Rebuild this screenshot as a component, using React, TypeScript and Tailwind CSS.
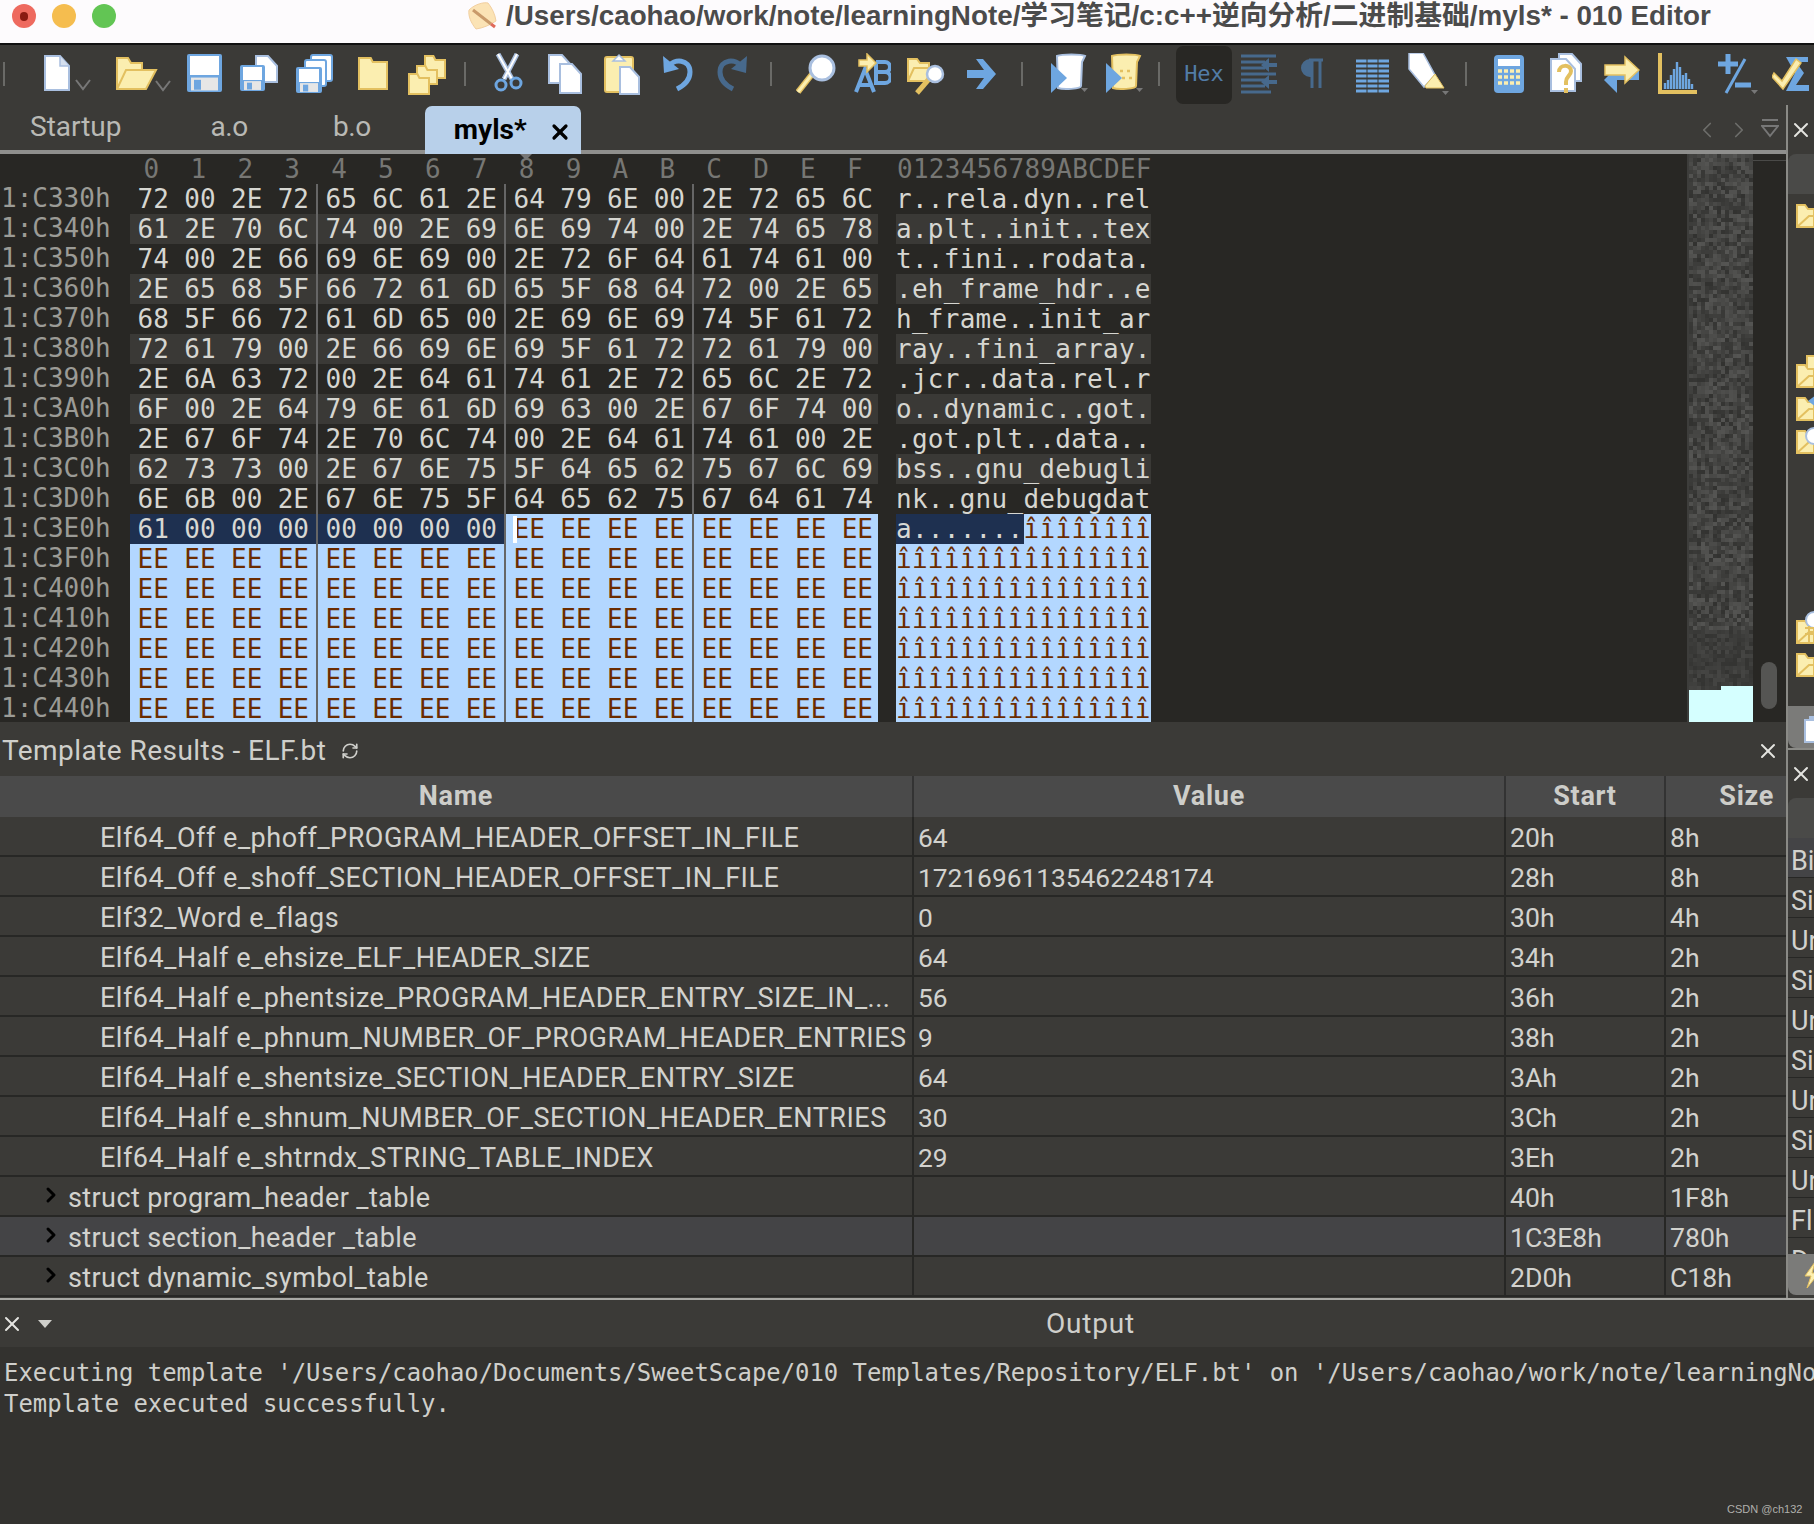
import { X, ChevronRight, ChevronLeft, RefreshCw } from 'lucide-react';

const HEX_ROWS = [
  { addr: '1:C330h', bytes: '72 00 2E 72 65 6C 61 2E 64 79 6E 00 2E 72 65 6C' },
  { addr: '1:C340h', bytes: '61 2E 70 6C 74 00 2E 69 6E 69 74 00 2E 74 65 78' },
  { addr: '1:C350h', bytes: '74 00 2E 66 69 6E 69 00 2E 72 6F 64 61 74 61 00' },
  { addr: '1:C360h', bytes: '2E 65 68 5F 66 72 61 6D 65 5F 68 64 72 00 2E 65' },
  { addr: '1:C370h', bytes: '68 5F 66 72 61 6D 65 00 2E 69 6E 69 74 5F 61 72' },
  { addr: '1:C380h', bytes: '72 61 79 00 2E 66 69 6E 69 5F 61 72 72 61 79 00' },
  { addr: '1:C390h', bytes: '2E 6A 63 72 00 2E 64 61 74 61 2E 72 65 6C 2E 72' },
  { addr: '1:C3A0h', bytes: '6F 00 2E 64 79 6E 61 6D 69 63 00 2E 67 6F 74 00' },
  { addr: '1:C3B0h', bytes: '2E 67 6F 74 2E 70 6C 74 00 2E 64 61 74 61 00 2E' },
  { addr: '1:C3C0h', bytes: '62 73 73 00 2E 67 6E 75 5F 64 65 62 75 67 6C 69' },
  { addr: '1:C3D0h', bytes: '6E 6B 00 2E 67 6E 75 5F 64 65 62 75 67 64 61 74' },
  { addr: '1:C3E0h', bytes: '61 00 00 00 00 00 00 00 EE EE EE EE EE EE EE EE' },
  { addr: '1:C3F0h', bytes: 'EE EE EE EE EE EE EE EE EE EE EE EE EE EE EE EE' },
  { addr: '1:C400h', bytes: 'EE EE EE EE EE EE EE EE EE EE EE EE EE EE EE EE' },
  { addr: '1:C410h', bytes: 'EE EE EE EE EE EE EE EE EE EE EE EE EE EE EE EE' },
  { addr: '1:C420h', bytes: 'EE EE EE EE EE EE EE EE EE EE EE EE EE EE EE EE' },
  { addr: '1:C430h', bytes: 'EE EE EE EE EE EE EE EE EE EE EE EE EE EE EE EE' },
  { addr: '1:C440h', bytes: 'EE EE EE EE EE EE EE EE EE EE EE EE EE EE EE EE' },
];

const TEMPLATE_ROWS = [
  { name: 'Elf64_Off e_phoff_PROGRAM_HEADER_OFFSET_IN_FILE', value: '64', start: '20h', size: '8h' },
  { name: 'Elf64_Off e_shoff_SECTION_HEADER_OFFSET_IN_FILE', value: '17216961135462248174', start: '28h', size: '8h' },
  { name: 'Elf32_Word e_flags', value: '0', start: '30h', size: '4h' },
  { name: 'Elf64_Half e_ehsize_ELF_HEADER_SIZE', value: '64', start: '34h', size: '2h' },
  { name: 'Elf64_Half e_phentsize_PROGRAM_HEADER_ENTRY_SIZE_IN_...', value: '56', start: '36h', size: '2h' },
  { name: 'Elf64_Half e_phnum_NUMBER_OF_PROGRAM_HEADER_ENTRIES', value: '9', start: '38h', size: '2h' },
  { name: 'Elf64_Half e_shentsize_SECTION_HEADER_ENTRY_SIZE', value: '64', start: '3Ah', size: '2h' },
  { name: 'Elf64_Half e_shnum_NUMBER_OF_SECTION_HEADER_ENTRIES', value: '30', start: '3Ch', size: '2h' },
  { name: 'Elf64_Half e_shtrndx_STRING_TABLE_INDEX', value: '29', start: '3Eh', size: '2h' },
  { name: 'struct program_header _table', value: '', start: '40h', size: '1F8h', tree: true },
  { name: 'struct section_header _table', value: '', start: '1C3E8h', size: '780h', tree: true, active: true },
  { name: 'struct dynamic_symbol_table', value: '', start: '2D0h', size: 'C18h', tree: true },
];

const SIDE_ROWS = ['Bi', 'Si', 'Ur', 'Si', 'Ur', 'Si', 'Ur', 'Si', 'Ur', 'Fl', 'D'];

const BLUE = '#6ea6e0';
const PALE = '#a9bfdf';
const YEL = '#fbeeb0';
const YELL = '#e3c060';
const DIM = '#47698c';

function Ico({ w, className = '', children }: { w: number; className?: string; children: React.ReactNode }) {
  return (
    <svg width={w} height={42} viewBox={`0 0 ${w} 42`} className={`shrink-0 ${className}`}>
      {children}
    </svg>
  );
}

function Sep({ className = '' }: { className?: string }) {
  return <div className={`w-[2px] h-[24px] bg-[#6a6a67] shrink-0 ${className}`} />;
}

function Doc({ x, y, w, h, fill = '#fff' }: { x: number; y: number; w: number; h: number; fill?: string }) {
  return (
    <path
      d={`M${x} ${y}h${w - 9}l9 10v${h - 10}h-${w}z`}
      fill={fill}
      stroke={PALE}
      strokeWidth="2"
    />
  );
}

function Floppy({ x, y, w, h }: { x: number; y: number; w: number; h: number }) {
  return (
    <g>
      <rect x={x} y={y} width={w} height={h} rx="2" fill={BLUE} />
      <rect x={x + 3} y={y + 2} width={w - 6} height={h * 0.5} fill="#fff" />
      <rect x={x + 4} y={y + h * 0.62} width={w - 8} height={h * 0.34} fill="#e6e6e6" />
      <rect x={x + 7} y={y + h * 0.68} width={w * 0.2} height={h * 0.26} fill={BLUE} />
    </g>
  );
}

function FolderShape({ x, y, w, h }: { x: number; y: number; w: number; h: number }) {
  return (
    <path
      d={`M${x} ${y + h}V${y}h${w * 0.42}l2 4h${w * 0.58 - 2}V${y + h}z`}
      fill={YEL}
      stroke={YELL}
      strokeWidth="2"
    />
  );
}

function Toolbar() {
  return (
    <div className="flex items-center h-[60px] pb-[2px] bg-[#3b3a37] overflow-hidden">
      <Sep className="ml-[3px]" />
      <Ico w={49} className="ml-[39px]">
        <Doc x={1} y={3} w={24} h={34} />
        <path d="M16 3v10h9" fill="#d5dfee" stroke={PALE} strokeWidth="1.5" />
        <path d="M32 27l7 9 7-9" fill="none" stroke="#777" strokeWidth="2" />
      </Ico>
      <Ico w={56} className="ml-[23px]">
        <path d="M1 36V5h11l3 5h11v7" fill={YEL} stroke={YELL} strokeWidth="2" />
        <path d="M1 36l9-19h30l-10 19z" fill={YEL} stroke={YELL} strokeWidth="2" />
        <path d="M40 28l7 9 7-9" fill="none" stroke="#777" strokeWidth="2" />
      </Ico>
      <Ico w={35} className="ml-[15px]">
        <Floppy x={0} y={1} w={35} h={38} />
      </Ico>
      <Ico w={38} className="ml-[18px]">
        <Doc x={16} y={3} w={21} h={26} />
        <Floppy x={0} y={12} w={25} h={26} />
      </Ico>
      <Ico w={37} className="ml-[18px]">
        <rect x={15} y={2} width={21} height={26} rx="2" fill="#fff" stroke={BLUE} strokeWidth="2" />
        <rect x={9} y={7} width={21} height={26} rx="2" fill="#fff" stroke={BLUE} strokeWidth="2" />
        <Floppy x={0} y={14} w={26} h={26} />
      </Ico>
      <Ico w={30} className="ml-[25px]">
        <FolderShape x={1} y={5} w={28} h={31} />
      </Ico>
      <Ico w={39} className="ml-[20px]">
        <FolderShape x={17} y={3} w={20} h={22} />
        <FolderShape x={9} y={13} w={20} h={18} />
        <FolderShape x={1} y={21} w={20} h={20} />
      </Ico>
      <Sep className="ml-[17px]" />
      <Ico w={30} className="ml-[27px]">
        <path d="M5 1l14 25" stroke={PALE} strokeWidth="5" fill="none" />
        <path d="M24 1L11 26" stroke={PALE} strokeWidth="5" fill="none" />
        <path d="M5 1l14 25M24 1L11 26" stroke="#fff" strokeWidth="2" fill="none" />
        <circle cx="8" cy="32" r="5" fill="none" stroke={BLUE} strokeWidth="3" />
        <circle cx="23" cy="30" r="5" fill="none" stroke={BLUE} strokeWidth="3" />
      </Ico>
      <Ico w={34} className="ml-[25px]">
        <Doc x={1} y={2} w={22} h={28} />
        <Doc x={12} y={11} w={21} h={29} />
      </Ico>
      <Ico w={36} className="ml-[22px]">
        <rect x={1} y={4} width={28} height={35} rx="2" fill={YEL} stroke={YELL} strokeWidth="2" />
        <path d="M9 8l6-6 6 6z" fill="#fff" stroke={PALE} strokeWidth="1.5" />
        <Doc x={16} y={14} w={19} h={27} />
      </Ico>
      <Ico w={33} className="ml-[20px]">
        <path d="M8 14c6-9 22-8 22 5 0 9-7 14-13 17" fill="none" stroke={BLUE} strokeWidth="5" />
        <path d="M3 3l1 17 15-4z" fill={BLUE} />
      </Ico>
      <Ico w={34} className="ml-[23px]">
        <path d="M26 14c-6-9-22-8-22 5 0 9 7 14 13 17" fill="none" stroke={DIM} strokeWidth="5" />
        <path d="M31 3l-1 17-15-4z" fill={DIM} />
      </Ico>
      <Sep className="ml-[20px]" />
      <Ico w={40} className="ml-[24px]">
        <path d="M2 39l15-19" stroke={YELL} strokeWidth="6" />
        <path d="M2 39l15-19" stroke={YEL} strokeWidth="3" />
        <circle cx="26" cy="15" r="12" fill="#fff" stroke={PALE} strokeWidth="3" />
      </Ico>
      <Ico w={38} className="ml-[17px]">
        <path d="M3 39L12 16l9 23M6 32h12" fill="none" stroke={BLUE} strokeWidth="4" />
        <path d="M23 9h9a5 5 0 0 1 0 10h-9m9 0a5 5 0 0 1 0 11h-9V9" fill="none" stroke={BLUE} strokeWidth="4" />
        <path d="M6 7h8V1l9 9-9 9v-6H6z" fill={YEL} stroke={YELL} strokeWidth="1.5" />
      </Ico>
      <Ico w={38} className="ml-[16px]">
        <path d="M1 28V6h9l3 4h9v6" fill={YEL} stroke={YELL} strokeWidth="2" />
        <path d="M1 28l6-13h22l-6 13z" fill={YEL} stroke={YELL} strokeWidth="2" />
        <path d="M10 40l12-14" stroke={YELL} strokeWidth="5" />
        <circle cx="28" cy="21" r="8" fill="#fff" stroke={PALE} strokeWidth="2.5" />
      </Ico>
      <Ico w={31} className="ml-[21px]">
        <path d="M1 17h17L10 6h7l13 15-13 15h-7l8-11H1z" fill={BLUE} />
      </Ico>
      <Sep className="ml-[24px]" />
      <Ico w={40} className="ml-[27px]">
        <path d="M7 3c5-2 24-2 28 0l-3 6-1 24c0 3-18 4-23 2z" fill="#fff" stroke={PALE} strokeWidth="2" />
        <path d="M1 10l16 15-16 15z" fill={BLUE} />
        <path d="M31 35l7 0-3.5 4z" fill="#777" />
      </Ico>
      <Ico w={40} className="ml-[15px]">
        <path d="M7 3c5-2 24-2 28 0l-3 6-1 24c0 3-18 4-23 2z" fill={YEL} stroke={YELL} strokeWidth="2" />
        <path d="M15 18h3m4 0h3m-8 7h3m4 0h3" stroke={YELL} strokeWidth="2.5" />
        <path d="M1 10l16 15-16 15z" fill={BLUE} />
        <path d="M31 35l7 0-3.5 4z" fill="#777" />
      </Ico>
      <Sep className="ml-[13px]" />
      <div className="ml-[16px] w-[56px] h-[58px] mt-[2px] pb-[4px] bg-[#282724] rounded-[7px] flex items-center justify-center text-[22px] text-[#527ca6] font-['DejaVu_Sans_Mono',monospace] shrink-0">
        Hex
      </div>
      <Ico w={37} className="ml-[9px]">
        <path d="M0 3h35M0 9h24M0 15h24M0 21h35M0 27h24M0 33h24M0 39h30" stroke={DIM} strokeWidth="3" />
        <path d="M36 10H28V5l-8 7 8 7v-5h8zM36 27H28v-5l-8 7 8 7v-5h8z" fill={DIM} />
      </Ico>
      <Ico w={25} className="ml-[22px]">
        <path d="M10 7a8 8 0 0 0 0 16z" fill={DIM} stroke={DIM} strokeWidth="2" />
        <path d="M9 7h14M12 7v28M20 7v28" stroke={DIM} strokeWidth="3" fill="none" />
      </Ico>
      <Ico w={35} className="ml-[30px]">
        <path d="M1 8h33M1 13h33M1 18h33M1 23h33M1 28h33M1 33h33M1 38h33" stroke={BLUE} strokeWidth="3" />
        <path d="M12 6v34M23 6v34" stroke="#3b3a37" strokeWidth="1" />
      </Ico>
      <Ico w={42} className="ml-[18px]">
        <path d="M1 0h14l12 22-11 12-15-18z" fill="#fff" stroke={PALE} strokeWidth="1.5" />
        <path d="M17 33l10-12 9 14h-18z" fill={YEL} stroke={YELL} strokeWidth="1" />
        <path d="M34 38h7l-3.5 4z" fill="#777" />
      </Ico>
      <Sep className="ml-[15px]" />
      <Ico w={30} className="ml-[27px]">
        <rect x={0} y={2} width={30} height={38} rx="4" fill={BLUE} />
        <rect x={4} y={6} width={22} height={7} fill="#fff" />
        <path d="M4 18h22M4 24h22M4 30h22" stroke={YEL} strokeWidth="3.5" strokeDasharray="4 2" />
      </Ico>
      <Ico w={32} className="ml-[26px]">
        <Doc x={9} y={1} w={22} h={27} />
        <Doc x={1} y={6} w={24} h={32} />
        <path d="M9 19c0-8 12-8 12-1 0 5-5 5-5 11v3" fill="none" stroke={YELL} strokeWidth="4" />
        <path d="M16 35v5" stroke={YELL} strokeWidth="4" />
      </Ico>
      <Ico w={37} className="ml-[21px]">
        <path d="M6 22h8v-5h22v10h-22v5" fill={BLUE} />
        <path d="M1 27l13-13v26z" fill={BLUE} />
        <path d="M2 12h20V4l14 13-14 13v-8H2z" fill={YEL} stroke={YELL} strokeWidth="1.5" />
      </Ico>
      <Ico w={40} className="ml-[18px]">
        <path d="M2 0v39h37" fill="none" stroke={YELL} strokeWidth="4" />
        <path d="M7 36v-6M10 36v-9M13 36v-14M16 36v-20M19 36v-27M22 36v-22M25 36v-14M28 36v-16M31 36v-10M34 36v-5" stroke={BLUE} strokeWidth="2.4" />
      </Ico>
      <Ico w={42} className="ml-[18px]">
        <path d="M12 1v20M2 11h20" stroke={BLUE} strokeWidth="5" />
        <path d="M29 6L10 40" stroke={BLUE} strokeWidth="3" />
        <path d="M19 32h16" stroke={BLUE} strokeWidth="5" />
        <path d="M35 37h7l-3.5 4z" fill="#777" />
      </Ico>
      <Ico w={48} className="ml-[14px]">
        <path d="M14 4h22v5H24l8 11-8 12h13v6H14l9-18z" fill={BLUE} />
        <path d="M2 20l8 8L24 6l5 4-18 26L0 24z" fill={YEL} stroke={YELL} strokeWidth="1.5" />
      </Ico>
    </div>
  );
}

function TabStrip() {
  return (
    <div className="flex items-end h-[45px] text-[28px] text-[#b9b9b5] bg-[#3b3a37] relative">
      <span className="ml-[30px] h-[41px] leading-[36px]">Startup</span>
      <span className="ml-[89px] h-[41px] leading-[36px] tracking-[-0.4px]">a.o</span>
      <span className="ml-[85px] h-[41px] leading-[36px] tracking-[-0.4px]">b.o</span>
      <div className="ml-[54px] w-[156px] h-[48px] -mb-[4px] z-10 bg-[#b8d0ea] rounded-t-[7px] flex items-center text-black font-bold">
        <span className="ml-[29px]">myls*</span>
        <X size={24} strokeWidth={3.2} className="ml-[21px] mt-[3px]" />
      </div>
      <div className="ml-auto mr-[7px] flex items-center gap-[6px] h-[41px] text-[#6d6d6a]">
        <ChevronLeft size={26} strokeWidth={1.6} />
        <ChevronRight size={26} strokeWidth={1.6} />
        <svg width="18" height="22" viewBox="0 0 18 22" className="ml-[3px]">
          <path d="M1 1h16M1 7h16l-8 10z" fill="none" stroke="#777" strokeWidth="2" />
        </svg>
      </div>
    </div>
  );
}

function toAscii(bytes: string[]) {
  return bytes
    .map((b) => {
      if (b === '00') return '.';
      return String.fromCharCode(parseInt(b, 16));
    })
    .join('');
}

function HexGroup({ bytes, tone, last }: { bytes: string[]; tone: string; last: boolean }) {
  const toneClass =
    tone === 'navy'
      ? 'bg-[#1e3050] text-[#d8d8d4]'
      : tone === 'sel'
        ? 'bg-[#b3d7ff] text-[#6b2c00]'
        : tone === 'stripe'
          ? 'bg-[#3a3936] text-[#d6d6d1]'
          : 'text-[#d6d6d1]';
  return (
    <div className={`flex h-full ${last ? 'w-[184px]' : 'w-[188px] border-r-2 border-[#666]'} ${toneClass}`}>
      {bytes.map((b, i) => (
        <span key={i} className="w-[46.9px] shrink-0 text-center -ml-[0.2px]">
          {b}
        </span>
      ))}
    </div>
  );
}

function HexRow({ addr, bytes, index }: { addr: string; bytes: string; index: number }) {
  const list = bytes.split(' ');
  const selected = index >= 12;
  const split = index === 11;
  const tone = selected ? 'sel' : index % 2 === 1 ? 'stripe' : 'plain';
  const text = toAscii(list);
  return (
    <div className="flex h-[30px] leading-[30px] shrink-0">
      <span className="w-[130px] shrink-0 pl-[1px] text-[#9b9b96] leading-[28px]">{addr}</span>
      <div className="flex relative">
        {[0, 1, 2, 3].map((g) => (
          <HexGroup
            key={g}
            bytes={list.slice(g * 4, g * 4 + 4)}
            tone={split ? (g < 2 ? 'navy' : 'sel') : tone}
            last={g === 3}
          />
        ))}
        {split && <span className="absolute left-[383px] top-[2px] w-[4px] h-[27px] bg-white" />}
      </div>
      <div className="ml-[18px] w-[255px] flex tracking-[0.27px]">
        {split ? (
          <>
            <span className="bg-[#1e3050] text-[#d8d8d4] w-[128px]">{text.slice(0, 8)}</span>
            <span className="bg-[#b3d7ff] text-[#6b2c00] flex-1">{text.slice(8)}</span>
          </>
        ) : (
          <span
            className={`flex-1 ${
              selected ? 'bg-[#b3d7ff] text-[#6b2c00]' : index % 2 === 1 ? 'bg-[#3a3936] text-[#d6d6d1]' : 'text-[#d6d6d1]'
            }`}
          >
            {text}
          </span>
        )}
      </div>
    </div>
  );
}

function Minimap() {
  const cells = [];
  let seed = 7;
  for (let y = 0; y < 134; y++) {
    for (let x = 0; x < 16; x++) {
      seed = (seed * 1103515245 + 12345) & 0x7fffffff;
      const v = (seed >> 16) % 36;
      const shade = y > 118 ? 52 + (v >> 1) : 50 + v;
      cells.push(<rect key={`${x}-${y}`} x={x * 4} y={y * 4} width="4" height="4" fill={`rgb(${shade},${shade},${shade - 2})`} />);
    }
  }
  return (
    <svg width="64" height="568" viewBox="0 0 64 568" className="shrink-0">
      {cells}
      <path d="M0 536H32V532H64V568H0z" fill="#d5ffff" />
    </svg>
  );
}

function HexView() {
  const header = '0123456789ABCDEF'.split('');
  return (
    <div className="flex h-[568px] bg-[#282724] font-['DejaVu_Sans_Mono',monospace] text-[26px] overflow-hidden relative">
      <span className="absolute left-[520px] top-0 w-0 h-0 border-x-[6px] border-x-transparent border-t-[6px] border-t-[#777]" />
      <div className="w-[1689px] shrink-0 flex flex-col overflow-hidden border-r-2 border-[#3d3d3b]">
        <div className="flex h-[30px] leading-[30px] shrink-0 text-[#777774]">
          <span className="w-[128px] shrink-0" />
          <div className="flex w-[750px] shrink-0">
            {header.map((h) => (
              <span key={h} className="w-[46.9px] shrink-0 text-center">
                {h}
              </span>
            ))}
          </div>
          <span className="ml-[19px] tracking-[0.27px]">0123456789ABCDEF</span>
        </div>
        {HEX_ROWS.map((r, i) => (
          <HexRow key={r.addr} addr={r.addr} bytes={r.bytes} index={i} />
        ))}
      </div>
      <Minimap />
      <div className="flex-1 relative">
        <div className="mt-[6px] h-[1px] bg-[#4a4a48]" />
        <div className="absolute left-[8px] top-[508px] w-[16px] h-[47px] rounded-[8px] bg-[#555553]" />
      </div>
    </div>
  );
}

function TemplateTable() {
  const cols = 'grid grid-cols-[914px_592px_160px_120px]';
  return (
    <div className="text-[26.6px] text-[#d2d2ce]">
      <div className={`${cols} h-[41px] pt-0 font-bold text-[27px] text-[#cdcdc9] tracking-[0.7px] border-b border-[#2a2a28]`}>
        <div className="bg-[#4a4a4a] border-r-2 border-[#333] flex items-center justify-center">Name</div>
        <div className="bg-[#4a4a4a] border-r-2 border-[#333] flex items-center justify-center">Value</div>
        <div className="bg-[#4a4a4a] border-r-2 border-[#333] flex items-center justify-center">Start</div>
        <div className="bg-[#4a4a4a] flex items-center justify-end pr-[12px]">Size</div>
      </div>
      {TEMPLATE_ROWS.map((r) => (
        <div
          key={r.name}
          className={`${cols} h-[40px] leading-[38px] border-b-2 border-[#272725] ${r.active ? 'bg-[#444446]' : ''}`}
        >
          <div className="pt-[2px] border-r-2 border-[#272725] flex items-center whitespace-nowrap overflow-hidden text-[27px]">
            {r.tree ? (
              <>
                <ChevronRight size={24} strokeWidth={3} className="ml-[39px] mr-[5px] -mt-[6px] text-black" />
                <span className="tracking-[0.4px]">{r.name}</span>
              </>
            ) : (
              <span className="ml-[100px] tracking-[0.52px]">{r.name}</span>
            )}
          </div>
          <div className="pt-[2px] border-r-2 border-[#272725] pl-[4px] text-[26.3px]">{r.value}</div>
          <div className="pt-[2px] border-r-2 border-[#272725] pl-[4px]">{r.start}</div>
          <div className="pt-[2px] pl-[4px]">{r.size}</div>
        </div>
      ))}
    </div>
  );
}

function SideFolder({ className = '', children }: { className?: string; children?: React.ReactNode }) {
  return (
    <svg width="16" height="26" viewBox="0 0 16 26" className={`ml-[8px] shrink-0 overflow-visible ${className}`}>
      <path d="M1 25V3h8l3 4h6v18z" fill={YEL} stroke={YELL} strokeWidth="2" />
      <path d="M1 25l12-11h6" fill="none" stroke={YELL} strokeWidth="2" />
      {children}
    </svg>
  );
}

function SidePanels() {
  return (
    <div className="w-[28px] shrink-0 border-l-2 border-[#8a8a86] flex flex-col overflow-hidden text-[27px] text-[#d2d2ce]">
      <div className="h-[49px] flex items-center justify-center shrink-0">
        <X size={24} strokeWidth={2} className="text-[#e4e4e0]" />
      </div>
      <div className="h-[596px] shrink-0 flex flex-col border-b-2 border-[#8a8a86]">
        <div className="h-[40px] w-full rounded-tl-[8px] bg-[#4a4a48] shrink-0" />
        <SideFolder className="mt-[8px]" />
        <SideFolder className="mt-[134px]">
          <path d="M11 6V-6h8V6" fill={YEL} stroke={YELL} strokeWidth="2" />
        </SideFolder>
        <SideFolder className="mt-[7px]">
          <path d="M12 6l8-6v12z" fill={BLUE} />
        </SideFolder>
        <SideFolder className="mt-[7px]">
          <circle cx="18" cy="8" r="8" fill="#fff" stroke={PALE} strokeWidth="2" />
        </SideFolder>
        <SideFolder className="mt-[164px]">
          <circle cx="18" cy="2" r="8" fill="#fff" stroke={PALE} strokeWidth="2" />
          <path d="M9 10h10M9 16h10M13 8v16" stroke={YELL} strokeWidth="2" />
        </SideFolder>
        <SideFolder className="mt-[7px]" />
        <div className="mt-auto h-[42px] rounded-bl-[8px] bg-[#7b7b79] flex items-center pl-[16px]">
          <svg width="10" height="30" viewBox="0 0 10 30" className="overflow-visible">
            <rect x="1" y="8" width="20" height="22" fill="#fff" stroke={PALE} strokeWidth="2" />
            <rect x="5" y="4" width="10" height="5" fill={PALE} />
          </svg>
        </div>
      </div>
      <div className="h-[48px] flex items-center justify-center shrink-0">
        <X size={24} strokeWidth={2} className="text-[#e4e4e0]" />
      </div>
      <div className="h-[40px] rounded-tl-[8px] bg-[#4a4a48] shrink-0" />
      <div className="h-[416px] overflow-hidden shrink-0">
        {SIDE_ROWS.map((s, i) => (
          <div
            key={i}
            className={`h-[40px] pt-[7px] leading-[33px] pl-[3px] border-b border-[#272725] whitespace-nowrap ${i === 0 ? 'bg-[#444446]' : ''}`}
          >
            {s}
          </div>
        ))}
      </div>
      <div className="h-[41px] rounded-bl-[8px] bg-[#7b7b79] flex items-center pl-[15px] shrink-0">
        <svg width="12" height="26" viewBox="0 0 12 26" className="overflow-visible">
          <path d="M12 0L2 14h6L4 26l12-15H9z" fill={YEL} stroke={YELL} strokeWidth="1" />
        </svg>
      </div>
    </div>
  );
}

export default function App() {
  return (
    <div className="w-[1814px] h-[1524px] overflow-hidden flex flex-col bg-[#33322f] font-['Roboto',sans-serif]">
      <div className="h-[45px] shrink-0 bg-[#fdfbfd] border-b-2 border-[#111] flex items-start relative">
        <span className="ml-[12px] mt-[4px] w-[24px] h-[24px] rounded-full bg-[#ee6a5f] flex items-center justify-center">
          <span className="w-[8px] h-[9px] rounded-full bg-[#8a1a12]" />
        </span>
        <span className="ml-[16px] mt-[4px] w-[24px] h-[24px] rounded-full bg-[#f5bd4f]" />
        <span className="ml-[16px] mt-[4px] w-[24px] h-[24px] rounded-full bg-[#62c554]" />
        <svg width="32" height="30" viewBox="0 0 32 30" className="ml-[350px] mt-[1px] shrink-0">
          <path d="M3 9C9 3 18 1 22 2c4 5 7 11 8 18-6 4-13 7-20 8C5 22 2 15 3 9z" fill="#fbe3b5" stroke="#f2cfa0" strokeWidth="1" />
          <path d="M7 9l18 14" stroke="#c99a6a" strokeWidth="3" />
          <path d="M25 23l4 3" stroke="#e06a5a" strokeWidth="3" />
        </svg>
        <span className="ml-[8px] mt-[1px] text-[27.8px] leading-[30px] font-bold text-[#4b4b4b] whitespace-nowrap font-['Liberation_Sans','Noto_Sans_CJK_SC',sans-serif]">
          /Users/caohao/work/note/learningNote/学习笔记/c:c++逆向分析/二进制基础/myls* - 010 Editor
        </span>
      </div>
      <Toolbar />
      <div className="flex h-[1193px] shrink-0 bg-[#3b3a37] overflow-hidden">
        <div className="w-[1786px] shrink-0 flex flex-col">
          <TabStrip />
          <div className="h-[4px] bg-[#8f8f8d] shrink-0" />
          <HexView />
          <div className="h-[54px] pt-[4px] flex items-center shrink-0 text-[#cfcfcb] text-[28px]">
            <span className="ml-[2px] tracking-[0.45px]">Template Results - ELF.bt</span>
            <RefreshCw size={18} strokeWidth={2.2} className="ml-[15px]" />
            <X size={24} strokeWidth={2} className="ml-auto mr-[6px] text-[#e4e4e0]" />
          </div>
          <TemplateTable />
        </div>
        <SidePanels />
      </div>
      <div className="h-[2px] bg-[#a8a8a4] shrink-0" />
      <div className="h-[47px] bg-[#3b3a37] flex items-center relative shrink-0 text-[28px] text-[#cfcfcb]">
        <X size={24} strokeWidth={2} className="text-[#e4e4e0]" />
        <span className="ml-[14px] w-0 h-0 border-x-[7px] border-x-transparent border-t-[8px] border-t-[#cfcfcb]" />
        <span className="absolute left-[1046px] tracking-[0.8px]">Output</span>
      </div>
      <div className="flex-1 relative pt-[11px] pl-[4px] font-['DejaVu_Sans_Mono',monospace] text-[23.9px] leading-[31px] text-[#cfcfcb] whitespace-nowrap overflow-hidden">
        <div>Executing template '/Users/caohao/Documents/SweetScape/010 Templates/Repository/ELF.bt' on '/Users/caohao/work/note/learningNote/学习笔记</div>
        <div>Template executed successfully.</div>
        <span className="absolute left-[1727px] bottom-[8px] text-[11px] leading-[14px] text-[#b0b0ac] font-['Liberation_Sans',sans-serif]">
          CSDN @ch132
        </span>
      </div>
    </div>
  );
}
